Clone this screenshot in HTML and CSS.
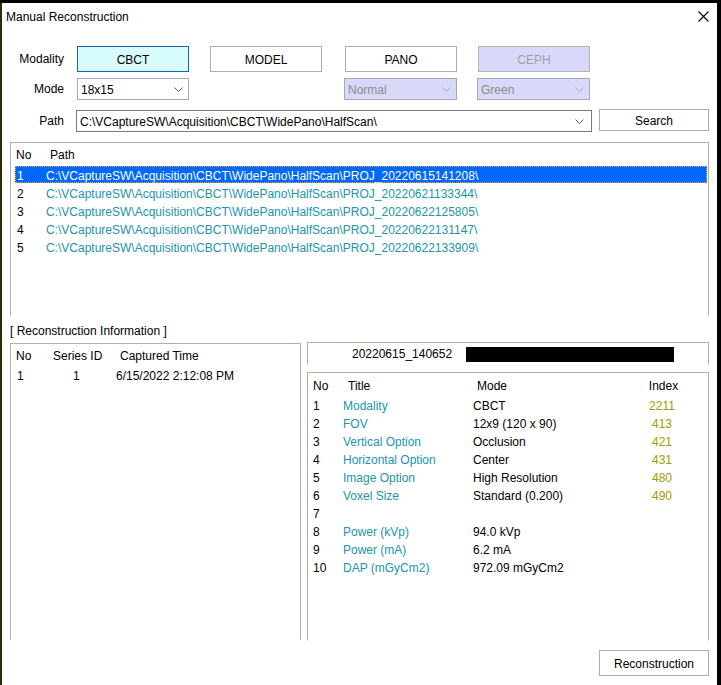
FILE: index.html
```html
<!DOCTYPE html>
<html lang="en">
<head>
  <meta charset="UTF-8">
  <title>Manual Reconstruction</title>
  <link rel="stylesheet" href="styles.css">
</head>
<body>
  <div class="window">
    <div class="titlebar">
      <span class="title">Manual Reconstruction</span>
      <svg class="close" width="11" height="11" viewBox="0 0 11 11"><path d="M0.5 0.5 L10.5 10.5 M10.5 0.5 L0.5 10.5" stroke="#000" stroke-width="1.1" fill="none"/></svg>
    </div>

    <!-- Controls -->
    <div class="row row-modality">
      <label class="lbl">Modality</label>
      <button class="btn btn-active">CBCT</button>
      <button class="btn btn-model">MODEL</button>
      <button class="btn btn-pano">PANO</button>
      <button class="btn btn-disabled btn-ceph">CEPH</button>
    </div>

    <div class="row row-mode">
      <label class="lbl">Mode</label>
      <div class="combo combo-mode">
        <span>18x15</span>
        <svg class="chev" width="9" height="5" viewBox="0 0 9 5"><path d="M0.5 0.5 L4.5 4.5 L8.5 0.5" stroke="#555" fill="none"/></svg>
      </div>
      <div class="combo combo-disabled combo-normal">
        <span>Normal</span>
        <svg class="chev" width="9" height="5" viewBox="0 0 9 5"><path d="M0.5 0.5 L4.5 4.5 L8.5 0.5" stroke="#aaa" fill="none"/></svg>
      </div>
      <div class="combo combo-disabled combo-green">
        <span>Green</span>
        <svg class="chev" width="9" height="5" viewBox="0 0 9 5"><path d="M0.5 0.5 L4.5 4.5 L8.5 0.5" stroke="#aaa" fill="none"/></svg>
      </div>
    </div>

    <div class="row row-path">
      <label class="lbl">Path</label>
      <div class="combo combo-path">
        <span>C:\VCaptureSW\Acquisition\CBCT\WidePano\HalfScan\</span>
        <svg class="chev" width="9" height="5" viewBox="0 0 9 5"><path d="M0.5 0.5 L4.5 4.5 L8.5 0.5" stroke="#555" fill="none"/></svg>
      </div>
      <button class="btn btn-search">Search</button>
    </div>

    <!-- Project list -->
    <div class="box path-list">
      <div class="plist-head">
        <span class="c-no">No</span>
        <span>Path</span>
      </div>
      <div class="plist-row selected"><span class="c-no">1</span><span class="p">C:\VCaptureSW\Acquisition\CBCT\WidePano\HalfScan\PROJ_20220615141208\</span></div>
      <div class="plist-row"><span class="c-no">2</span><span class="p">C:\VCaptureSW\Acquisition\CBCT\WidePano\HalfScan\PROJ_20220621133344\</span></div>
      <div class="plist-row"><span class="c-no">3</span><span class="p">C:\VCaptureSW\Acquisition\CBCT\WidePano\HalfScan\PROJ_20220622125805\</span></div>
      <div class="plist-row"><span class="c-no">4</span><span class="p">C:\VCaptureSW\Acquisition\CBCT\WidePano\HalfScan\PROJ_20220622131147\</span></div>
      <div class="plist-row"><span class="c-no">5</span><span class="p">C:\VCaptureSW\Acquisition\CBCT\WidePano\HalfScan\PROJ_20220622133909\</span></div>
    </div>

    <div class="caption">[ Reconstruction Information ]</div>

    <div class="info">
      <div class="box series">
        <div class="s-head">
          <span>No</span><span>Series ID</span><span>Captured Time</span>
        </div>
        <div class="s-row">
          <span>1</span><span class="sid">1</span><span>6/15/2022 2:12:08 PM</span>
        </div>
      </div>

      <div class="info-right">
        <div class="box proj-head">
          <span class="proj-name">20220615_140652</span>
          <span class="redact"></span>
        </div>
        <div class="box params">
          <div class="p-head">
            <span>No</span><span class="h">Title</span><span class="h">Mode</span><span class="idx">Index</span>
          </div>
          <div class="p-row"><span>1</span><span class="t">Modality</span><span>CBCT</span><span class="idx v">2211</span></div>
          <div class="p-row"><span>2</span><span class="t">FOV</span><span>12x9 (120 x 90)</span><span class="idx v">413</span></div>
          <div class="p-row"><span>3</span><span class="t">Vertical Option</span><span>Occlusion</span><span class="idx v">421</span></div>
          <div class="p-row"><span>4</span><span class="t">Horizontal Option</span><span>Center</span><span class="idx v">431</span></div>
          <div class="p-row"><span>5</span><span class="t">Image Option</span><span>High Resolution</span><span class="idx v">480</span></div>
          <div class="p-row"><span>6</span><span class="t">Voxel Size</span><span>Standard (0.200)</span><span class="idx v">490</span></div>
          <div class="p-row"><span>7</span><span class="t"></span><span></span><span class="idx v"></span></div>
          <div class="p-row"><span>8</span><span class="t">Power (kVp)</span><span>94.0 kVp</span><span class="idx v"></span></div>
          <div class="p-row"><span>9</span><span class="t">Power (mA)</span><span>6.2 mA</span><span class="idx v"></span></div>
          <div class="p-row"><span>10</span><span class="t">DAP (mGyCm2)</span><span>972.09 mGyCm2</span><span class="idx v"></span></div>
        </div>
      </div>
    </div>

    <div class="footer">
      <button class="btn btn-recon">Reconstruction</button>
    </div>
  </div>
</body>
</html>
```

FILE: styles.css
```css
html, body {
  margin: 0;
  background: #000;
}
body {
  font-family: 'Liberation Sans', Arial, sans-serif;
  font-size: 12px;
  color: #000;
  width: 721px;
  height: 685px;
  overflow: hidden;
}
.window {
  margin: 3px 4px 0 0;
  height: 682px;
  background: #fff;
  border-left: 2px solid #2c2c06;
}
.titlebar {
  display: flex;
  justify-content: space-between;
  align-items: flex-start;
  height: 30px;
  padding: 7px 8px 0 4px;
  box-sizing: border-box;
  line-height: 14px;
}
.close {
  margin-top: 1px;
}

/* control rows */
.row {
  display: flex;
  align-items: center;
}
.row-modality { margin-top: 13px; height: 26px; }
.row-mode { margin-top: 6px; height: 22px; }
.row-path { margin-top: 10px; height: 22px; }
.lbl {
  width: 62px;
  text-align: right;
  flex: none;
}
.btn {
  font-family: inherit;
  font-size: 12px;
  background: #fff;
  border: 1px solid #adadad;
  color: #000;
  padding: 1px 0 0;
  box-sizing: border-box;
  height: 26px;
  width: 112px;
}
.btn-active {
  margin-left: 13px;
  background: #d8fcfc;
  border-color: #1b5fb0;
}
.btn-model { margin-left: 21px; }
.btn-pano { margin-left: 23px; }
.btn-ceph { margin-left: 21px; }
.btn-disabled {
  background: #d8d8f8;
  color: #a0a0a0;
  border-color: #b4b4b4;
}
.combo {
  display: flex;
  align-items: center;
  justify-content: space-between;
  box-sizing: border-box;
  height: 22px;
  border: 1px solid #a9a9a9;
  background: #fff;
  padding: 1px 5px 0 3px;
}
.combo-mode { margin-left: 13px; width: 112px; }
.combo-normal { margin-left: 155px; width: 113px; }
.combo-green { margin-left: 20px; width: 113px; }
.combo-disabled {
  background: #d8d8f8;
  color: #8c8c8c;
  border-color: #a8a8b8;
}
.combo-path {
  margin-left: 12px;
  width: 516px;
  border-color: #7a7a7a;
  padding-right: 7px;
}
.chev { flex: none; }
.btn-search {
  margin-left: 7px;
  width: 110px;
  height: 22px;
  margin-top: -2px;
}

/* boxes */
.box {
  box-sizing: border-box;
  border: 1px solid #b0b0a8;
  border-bottom-color: #fff;
}
.path-list {
  margin: 10px 8px 0 8px;
  height: 174px;
}
.plist-head {
  display: flex;
  height: 23px;
  line-height: 24px;
  padding-left: 5px;
}
.plist-head .c-no { width: 34px; }
.plist-row {
  display: flex;
  height: 18px;
  line-height: 18px;
  margin: 0 0 0 4px;
  width: 692px;
  box-sizing: border-box;
  padding: 1px 0 0 2px;
}
.plist-row .c-no { width: 29px; }
.plist-row .p { color: #2295aa; }
.plist-row.selected {
  height: 17px;
  margin-bottom: 1px;
  background: #0068ff;
  outline: 1px dotted #f0a030;
  outline-offset: -1px;
}
.plist-row.selected span { color: #fff; }

.caption {
  margin: 6px 8px 0 8px;
  height: 16px;
  line-height: 18px;
}

.info {
  display: flex;
  margin: 4px 8px 0 8px;
  gap: 6px;
}
.series {
  width: 291px;
  height: 297px;
  margin-top: 1px;
}
.s-head, .s-row {
  display: grid;
  grid-template-columns: 37px 62px auto;
  padding-left: 5px;
}
.s-head {
  height: 23px;
  line-height: 25px;
}
.s-row {
  height: 18px;
  line-height: 19px;
  padding-left: 6px;
}
.s-row .sid { padding-left: 19px; }
.s-head span:nth-child(3) { padding-left: 5px; }

.info-right {
  width: 402px;
  display: flex;
  flex-direction: column;
  gap: 7px;
}
.proj-head {
  height: 23px;
  display: flex;
  align-items: center;
  padding: 1px 0 0 44px;
}
.proj-name { width: 114px; }
.redact {
  width: 208px;
  height: 15px;
  background: #000;
  margin-top: 1px;
}
.params { height: 269px; }
.p-head, .p-row {
  display: grid;
  grid-template-columns: 30px 130px 159px 60px;
  padding-left: 5px;
}
.p-head {
  height: 24px;
  line-height: 26px;
}
.p-head .h { padding-left: 5px; }
.p-head span:nth-child(3) { padding-left: 4px; }
.p-row {
  height: 18px;
  line-height: 19px;
}
.idx { text-align: center; }
.p-head .idx { padding-left: 3px; }
.t { color: #2295aa; }
.v { color: #9f9c00; }

.footer {
  display: flex;
  justify-content: flex-end;
  margin: 9px 8px 0 8px;
}
.btn-recon {
  width: 110px;
  height: 26px;
}
```
